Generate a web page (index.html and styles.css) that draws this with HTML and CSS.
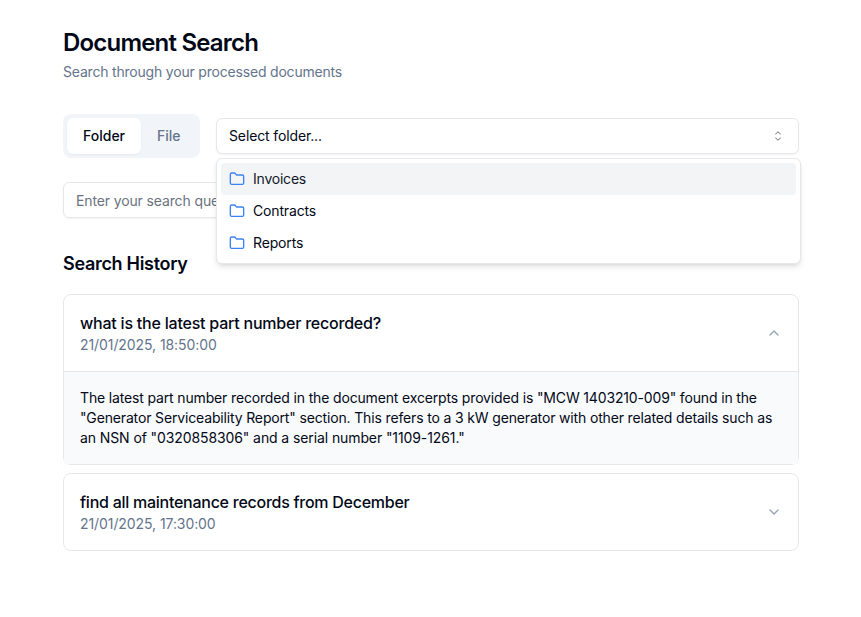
FILE: index.html
```html
<!DOCTYPE html>
<html lang="en">
<head>
<meta charset="utf-8">
<title>Document Search</title>
<link rel="stylesheet" href="styles.css">
</head>
<body>
<main class="page">
  <header>
    <h1 class="title">Document Search</h1>
    <p class="subtitle">Search through your processed documents</p>
  </header>
  <div class="controls">
    <div class="tabs">
      <button class="tab active">Folder</button>
      <button class="tab">File</button>
    </div>
    <div class="select">
      <button class="trigger">
        <span>Select folder...</span>
        <svg class="sort" viewBox="0 0 15 15"><path d="M4.93179 5.43179C4.75605 5.60753 4.75605 5.89245 4.93179 6.06819C5.10753 6.24392 5.39245 6.24392 5.56819 6.06819L7.49999 4.13638L9.43179 6.06819C9.60753 6.24392 9.89245 6.24392 10.0682 6.06819C10.2439 5.89245 10.2439 5.60753 10.0682 5.43179L7.81819 3.18179C7.64245 3.00605 7.35753 3.00605 7.18179 3.18179L4.93179 5.43179ZM10.0682 9.56819C10.2439 9.39245 10.2439 9.10753 10.0682 8.93179C9.89245 8.75606 9.60753 8.75606 9.43179 8.93179L7.49999 10.8636L5.56819 8.93179C5.39245 8.75606 5.10753 8.75606 4.93179 8.93179C4.75605 9.10753 4.75605 9.39245 4.93179 9.56819L7.18179 11.8182C7.35753 11.9939 7.64245 11.9939 7.81819 11.8182L10.0682 9.56819Z"/></svg>
      </button>
      <ul class="menu">
        <li class="option highlighted"><svg class="folder" viewBox="0 0 24 24"><path d="M20 20a2 2 0 0 0 2-2V8a2 2 0 0 0-2-2h-7.9a2 2 0 0 1-1.69-.9L9.6 3.9A2 2 0 0 0 7.93 3H4a2 2 0 0 0-2 2v13a2 2 0 0 0 2 2Z"/></svg><span>Invoices</span></li>
        <li class="option"><svg class="folder" viewBox="0 0 24 24"><path d="M20 20a2 2 0 0 0 2-2V8a2 2 0 0 0-2-2h-7.9a2 2 0 0 1-1.69-.9L9.6 3.9A2 2 0 0 0 7.93 3H4a2 2 0 0 0-2 2v13a2 2 0 0 0 2 2Z"/></svg><span>Contracts</span></li>
        <li class="option"><svg class="folder" viewBox="0 0 24 24"><path d="M20 20a2 2 0 0 0 2-2V8a2 2 0 0 0-2-2h-7.9a2 2 0 0 1-1.69-.9L9.6 3.9A2 2 0 0 0 7.93 3H4a2 2 0 0 0-2 2v13a2 2 0 0 0 2 2Z"/></svg><span>Reports</span></li>
      </ul>
    </div>
  </div>
  <div class="search">Enter your search query...</div>
  <h2 class="section-title">Search History</h2>
  <section class="history">
    <article class="entry">
      <div class="entry-head">
        <div><h3 class="question">what is the latest part number recorded?</h3><p class="date">21/01/2025, 18:50:00</p></div>
        <svg class="icon" viewBox="0 0 24 24"><path d="m18 15-6-6-6 6"/></svg>
      </div>
      <p class="answer">The latest part number recorded in the document excerpts provided is "MCW 1403210-009" found in the<br>"Generator Serviceability Report" section. This refers to a 3 kW generator with other related details such as<br><span class="numeric">an NSN of "0320858306" and a serial number "1109-1261."</span></p>
    </article>
    <article class="entry">
      <div class="entry-head">
        <div><h3 class="question tight">find all maintenance records from December</h3><p class="date">21/01/2025, 17:30:00</p></div>
        <svg class="icon" viewBox="0 0 24 24"><path d="m6 9 6 6 6-6"/></svg>
      </div>
    </article>
  </section>
</main>
</body>
</html>
```
FILE: styles.css
```css
* { box-sizing: border-box; }
body, h1, h2, h3, p, ul { margin: 0; padding: 0; }
body {
  background: #fff;
  color: #020817;
  font: 14px/20px Inter, sans-serif;
}
button { font: inherit; color: inherit; border: 0; background: none; }
.page { width: 736px; margin-left: 63px; padding-top: 27px; }
.title { font-size: 24px; line-height: 32px; font-weight: 600; letter-spacing: -0.8px; }
.subtitle { margin-top: 3px; color: #64748b; letter-spacing: -0.195px; }
.controls { display: flex; align-items: center; gap: 16px; margin-top: 32px; }
.tabs { display: flex; width: 137px; height: 44px; padding: 4px; border-radius: 8px; background: #f1f5f9; }
.tab { height: 36px; padding: 0 16px; border-radius: 6px; font-weight: 500; color: #64748b; }
.tab.active { background: #fff; color: #020817; box-shadow: 0 1px 2px rgba(0, 0, 0, .05); }
.select { position: relative; flex: 1; }
.trigger {
  display: flex; align-items: center; justify-content: space-between;
  width: 100%; height: 36px; padding: 0 12px;
  border: 1px solid #e5e7eb; border-radius: 6px; background: #fff;
  box-shadow: 0 1px 2px rgba(0, 0, 0, .05); letter-spacing: -0.13px;
}
.sort { width: 16px; height: 16px; fill: #000; opacity: .45; }
.icon { width: 16px; height: 16px; fill: none; stroke: #94a3b8; stroke-width: 2; stroke-linecap: round; stroke-linejoin: round; }
.menu {
  position: absolute; top: 40px; left: 0; z-index: 2; width: 585px; padding: 4px;
  list-style: none; background: #fff; border: 1px solid #e5e7eb; border-radius: 6px;
  box-shadow: 0 4px 6px -1px rgba(0, 0, 0, .1), 0 2px 4px -2px rgba(0, 0, 0, .1);
  letter-spacing: -0.15px;
}
.option { display: flex; align-items: center; gap: 8px; height: 32px; padding: 0 8px; border-radius: 4px; }
.highlighted { background: #f3f4f6; color: #111827; letter-spacing: -0.22px; }
.folder { width: 16px; height: 16px; fill: none; stroke: #3b82f6; stroke-width: 2; stroke-linecap: round; stroke-linejoin: round; }
.search {
  height: 36px; margin-top: 24px; padding: 8px 12px;
  border: 1px solid #e5e7eb; border-radius: 6px; color: #6b7280;
  box-shadow: 0 1px 2px rgba(0, 0, 0, .05); letter-spacing: -0.13px;
}
.section-title { margin-top: 32px; font-size: 18px; line-height: 28px; font-weight: 600; letter-spacing: -0.3px; }
.history { display: flex; flex-direction: column; gap: 8px; margin-top: 16px; }
.entry { border: 1px solid #e5e7eb; border-radius: 8px; }
.entry-head { display: flex; align-items: center; justify-content: space-between; height: 76px; padding: 0 16px; }
.question { font-size: 16px; line-height: 24px; font-weight: 500; letter-spacing: -0.22px; }
.question.tight { letter-spacing: -0.26px; }
.date { color: #64748b; letter-spacing: -0.08px; }
.answer { padding: 16px; border-top: 1px solid #e5e7eb; background: #f9fafc; white-space: nowrap; letter-spacing: -0.153px; }
.numeric { letter-spacing: -0.1px; }
```
